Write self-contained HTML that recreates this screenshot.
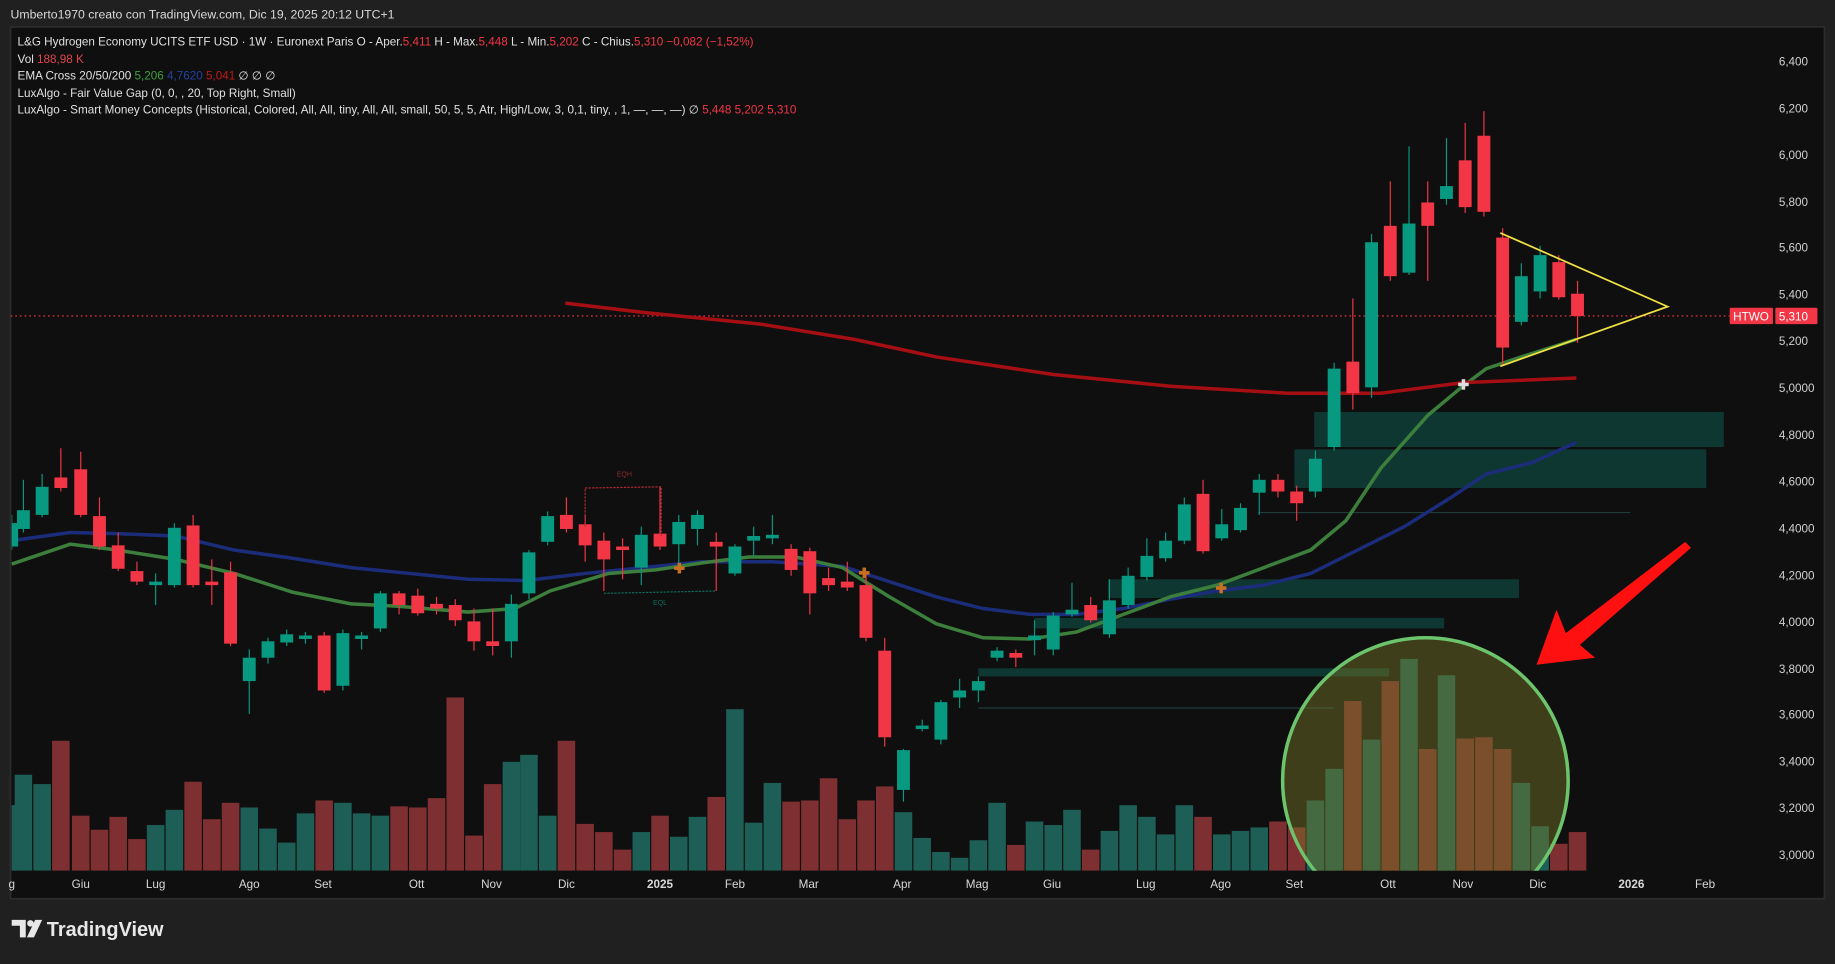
<!DOCTYPE html>
<html><head><meta charset="utf-8">
<style>
html,body{margin:0;padding:0;background:#202020;width:1835px;height:958px;overflow:hidden}
#w{position:absolute;left:0;top:0;width:1568px;height:819px;transform:scale(1.17028);transform-origin:0 0;background:#202020}
svg text{font-family:"Liberation Sans",sans-serif}
</style></head><body>
<div id="w">
<svg id="s" width="1568" height="819" viewBox="0 0 1568 819" xmlns="http://www.w3.org/2000/svg">
<defs><clipPath id="cp"><rect x="10" y="24" width="1490" height="720"/></clipPath></defs>
<rect x="0" y="0" width="1568" height="819" fill="#202020"/>
<text x="9" y="16" font-size="10.5" fill="#d8d8d8">Umberto1970 creato con TradingView.com, Dic 19, 2025 20:12 UTC+1</text>
<rect x="9" y="23" width="1550" height="745" fill="#0f0f0f" stroke="#2c2c2c" stroke-width="1.5"/>
<g fill="#0e3731">
<rect x="1123" y="352" width="350" height="30"/>
<rect x="1106" y="384" width="352" height="33"/>
<rect x="947" y="495" width="351" height="16"/>
<rect x="884" y="528" width="350" height="9"/>
<rect x="836" y="571" width="351" height="7"/>
</g>
<line x1="1075" y1="438" x2="1393" y2="438" stroke="#1e3c38" stroke-width="1"/>
<line x1="836" y1="605" x2="1140" y2="605" stroke="#1e3c38" stroke-width="1"/>
<line x1="9" y1="270" x2="1478" y2="270" stroke="#f23645" stroke-width="1" stroke-dasharray="1.5,2.5"/>
<g clip-path="url(#cp)">
<g id="vol"></g>
<circle cx="1218" cy="667" r="122" fill="rgba(120,120,40,0.45)" stroke="#6cc46c" stroke-width="3"/>
</g>
<g id="ema">
<polyline fill="none" stroke="#1b2d7a" stroke-width="3" points="10,462 60,455 100,456 150,458 200,470 250,477 300,485 350,490 400,495 450,496 500,490 560,484 600,480 660,480 720,484 760,497 800,510 840,520 880,525 920,525 960,520 1000,512 1040,505 1080,500 1120,490 1160,470 1200,450 1240,425 1270,405 1310,395 1347,378"/>
<polyline fill="none" stroke="#3c7f3c" stroke-width="3" points="10,482 60,465 100,470 150,478 200,490 250,506 300,516 340,518 400,523 440,520 470,505 520,490 560,487 600,481 640,476 680,476 720,485 760,510 800,533 840,545 880,546 920,540 960,525 1000,510 1040,500 1080,485 1120,470 1150,445 1180,400 1220,355 1250,330 1270,315 1300,305 1347,290"/>
<polyline fill="none" stroke="#a50f14" stroke-width="3" points="483,259 550,267 650,277 730,290 800,305 900,320 1000,330 1100,336 1180,336 1250,327 1347,323"/>
</g>
<g id="cdl" clip-path="url(#cp)"></g>
<text x="527" y="407" font-size="6" fill="#8a2a30">EQH</text>
<polyline points="500,450 500,417 565,416 565,458" fill="none" stroke="#b02a35" stroke-width="1" stroke-dasharray="2,1"/>
<polyline points="516,507 612,505" fill="none" stroke="#0e6b5a" stroke-width="1" stroke-dasharray="2,1"/>
<text x="558" y="517" font-size="6" fill="#0e6b5a">EQL</text>
<g fill="#c87020">
<rect x="576" y="484" width="9" height="3"/><rect x="579" y="481" width="3" height="9"/>
<rect x="734" y="488" width="9" height="3"/><rect x="737" y="485" width="3" height="9"/>
<rect x="1039" y="501" width="9" height="3"/><rect x="1042" y="498" width="3" height="9"/>
</g>
<g fill="#dddddd"><rect x="1246" y="327" width="9" height="3"/><rect x="1249" y="324" width="3" height="9"/></g>
<polyline points="1282,199 1425,262 1282,313" fill="none" stroke="#f0e040" stroke-width="1.5"/>
<polygon points="1440,463 1445,468 1350,551 1363,562 1313,568 1330,521 1338,541" fill="#ff1010"/>
<rect x="1478" y="263" width="37" height="14" rx="1" fill="#f23645"/>
<rect x="1517" y="263" width="36" height="14" rx="1" fill="#f23645"/>
<text x="1481" y="274" font-size="10" fill="#fff">HTWO</text>
<text x="1520" y="274" font-size="10" fill="#fff">5,310</text>
<g font-size="10" fill="#d0d0d0" text-anchor="start">
<text x="1520" y="56">6,400</text>
<text x="1520" y="96">6,200</text>
<text x="1520" y="136">6,000</text>
<text x="1520" y="176">5,800</text>
<text x="1520" y="215">5,600</text>
<text x="1520" y="255">5,400</text>
<text x="1520" y="295">5,200</text>
<text x="1520" y="335">5,0000</text>
<text x="1520" y="375">4,8000</text>
<text x="1520" y="415">4,6000</text>
<text x="1520" y="455">4,4000</text>
<text x="1520" y="495">4,2000</text>
<text x="1520" y="535">4,0000</text>
<text x="1520" y="575">3,8000</text>
<text x="1520" y="614">3,6000</text>
<text x="1520" y="654">3,4000</text>
<text x="1520" y="694">3,2000</text>
<text x="1520" y="734">3,0000</text>
</g>
<g font-size="10" fill="#d8d8d8" text-anchor="middle">
<text x="10" y="759">g</text><text x="69" y="759">Giu</text><text x="133" y="759">Lug</text><text x="213" y="759">Ago</text><text x="276" y="759">Set</text><text x="356" y="759">Ott</text><text x="420" y="759">Nov</text><text x="484" y="759">Dic</text><text x="564" y="759" font-weight="bold">2025</text><text x="628" y="759">Feb</text><text x="691" y="759">Mar</text><text x="771" y="759">Apr</text><text x="835" y="759">Mag</text><text x="899" y="759">Giu</text><text x="979" y="759">Lug</text><text x="1043" y="759">Ago</text><text x="1106" y="759">Set</text><text x="1186" y="759">Ott</text><text x="1250" y="759">Nov</text><text x="1314" y="759">Dic</text><text x="1394" y="759" font-weight="bold">2026</text><text x="1457" y="759">Feb</text>
</g>
<g font-size="10" fill="#e0e0e0">
<text x="15" y="39">L&amp;G Hydrogen Economy UCITS ETF USD · 1W · Euronext Paris  O - Aper.<tspan fill="#f23645">5,411</tspan>  H - Max.<tspan fill="#f23645">5,448</tspan>  L - Min.<tspan fill="#f23645">5,202</tspan>  C - Chius.<tspan fill="#f23645">5,310  −0,082 (−1,52%)</tspan></text>
<text x="15" y="54">Vol  <tspan fill="#e04550">188,98 K</tspan></text>
<text x="15" y="68">EMA Cross 20/50/200  <tspan fill="#3fa03f">5,206</tspan>  <tspan fill="#2540a0">4,7620</tspan>  <tspan fill="#c01818">5,041</tspan>  ∅  ∅  ∅</text>
<text x="15" y="83">LuxAlgo - Fair Value Gap (0, 0, , 20, Top Right, Small)</text>
<text x="15" y="97">LuxAlgo - Smart Money Concepts (Historical, Colored, All, All, tiny, All, All, small, 50, 5, 5, Atr, High/Low, 3, 0,1, tiny, , 1, —, —, —)  ∅  <tspan fill="#f23645">5,448  5,202  5,310</tspan></text>
</g>
<g fill="#e8e8e8">
<path d="M10 786h12v15h-5v-10h-7z"/><circle cx="26" cy="789" r="2.8"/><path d="M30 786h6l-7 15h-6z"/>
</g>
<text x="40" y="800" font-size="17" font-weight="bold" fill="#e8e8e8">TradingView</text>
</svg>
</div>
<script>
var C=[[10,'g',447,467,440,470,688],[20,'g',436,452,410,455,662],[36,'g',416,440,405,442,670],[52,'r',408,417,383,420,633],[69,'r',401,440,386,442,697],[85,'r',441,467,425,470,709],[101,'r',466,486,455,488,698],[117,'r',488,497,480,500,717],[133,'g',497,500,490,517,705],[149,'g',451,500,447,502,692],[165,'r',449,500,440,502,668],[181,'r',497,500,478,517,700],[197,'r',489,550,480,552,686],[213,'g',562,582,555,610,690],[229,'g',548,562,545,567,708],[245,'g',542,549,538,552,720],[261,'g',543,546,540,550,695],[277,'r',543,590,540,592,684],[293,'g',541,586,538,590,686],[309,'g',543,546,540,555,695],[325,'g',507,537,505,540,697],[341,'r',507,517,505,525,689],[357,'r',509,524,503,526,690],[373,'r',516,520,510,525,682],[389,'r',517,530,512,535,596],[405,'r',531,548,520,556,714],[421,'r',548,552,520,560,670],[437,'g',516,548,508,562,651],[452,'g',472,507,470,512,645],[468,'g',441,463,437,466,697],[484,'r',440,452,425,455,633],[500,'r',448,466,440,480,704],[516,'r',462,478,455,505,711],[532,'r',467,470,460,495,726],[548,'g',457,485,450,500,711],[564,'r',456,467,416,470,697],[580,'g',446,465,440,490,715],[596,'g',440,452,436,466,698],[612,'r',463,467,455,505,681],[628,'g',467,490,465,492,606],[644,'g',458,462,450,475,703],[660,'g',457,460,440,465,669],[676,'r',469,487,465,492,685],[692,'r',471,507,468,525,684],[708,'r',494,500,485,505,665],[724,'r',497,502,480,505,700],[740,'r',500,545,490,548,684],[756,'r',556,630,545,638,672],[772,'g',641,675,640,685,694],[788,'g',620,623,615,625,716],[804,'g',600,632,598,636,728],[820,'g',590,596,580,605,733],[836,'g',582,590,578,600,718],[852,'g',556,562,553,565,686],[868,'r',558,562,555,570,722],[884,'g',543,547,530,560,702],[900,'g',526,555,523,560,705],[916,'g',521,525,498,527,692],[932,'r',517,530,510,532,726],[948,'g',513,542,495,545,710],[964,'g',492,517,485,520,688],[980,'g',475,493,460,496,698],[996,'g',462,477,455,480,713],[1012,'g',431,462,425,465,688],[1028,'r',422,471,410,473,698],[1044,'g',448,460,435,462,713],[1060,'g',434,453,430,455,710],[1076,'g',410,421,405,440,707],[1092,'r',410,420,405,425,702],[1108,'r',420,430,415,445,707],[1124,'g',392,420,385,425,684],[1140,'g',315,382,310,385,657],[1156,'r',309,336,255,350,599],[1172,'g',207,331,200,340,632],[1188,'r',193,236,155,240,582],[1204,'g',191,233,125,235,563],[1220,'r',173,193,155,240,640],[1236,'g',159,170,118,175,577],[1252,'r',137,177,105,182,631],[1268,'r',116,181,95,185,630],[1284,'r',203,297,195,312,640],[1300,'g',236,275,225,278,669],[1316,'g',218,249,210,255,706],[1332,'r',224,254,218,256,721],[1348,'r',251,270,240,293,711]];
var NS='http://www.w3.org/2000/svg',v=document.getElementById('vol'),c=document.getElementById('cdl');
function el(p,t,a){var e=document.createElementNS(NS,t);for(var k in a)e.setAttribute(k,a[k]);p.appendChild(e);}
C.forEach(function(d){var x=d[0],g=d[1]=='g',col=g?'#089981':'#f23645';
el(v,'rect',{x:x-7.5,y:d[6],width:15,height:744-d[6],fill:g?'#1d5e56':'#7e2f31'});
el(c,'rect',{x:x-0.5,y:d[4],width:1,height:d[5]-d[4],fill:col});
el(c,'rect',{x:x-5.5,y:d[2],width:11,height:Math.max(2,d[3]-d[2]),fill:col});});
</script>
</body></html>
